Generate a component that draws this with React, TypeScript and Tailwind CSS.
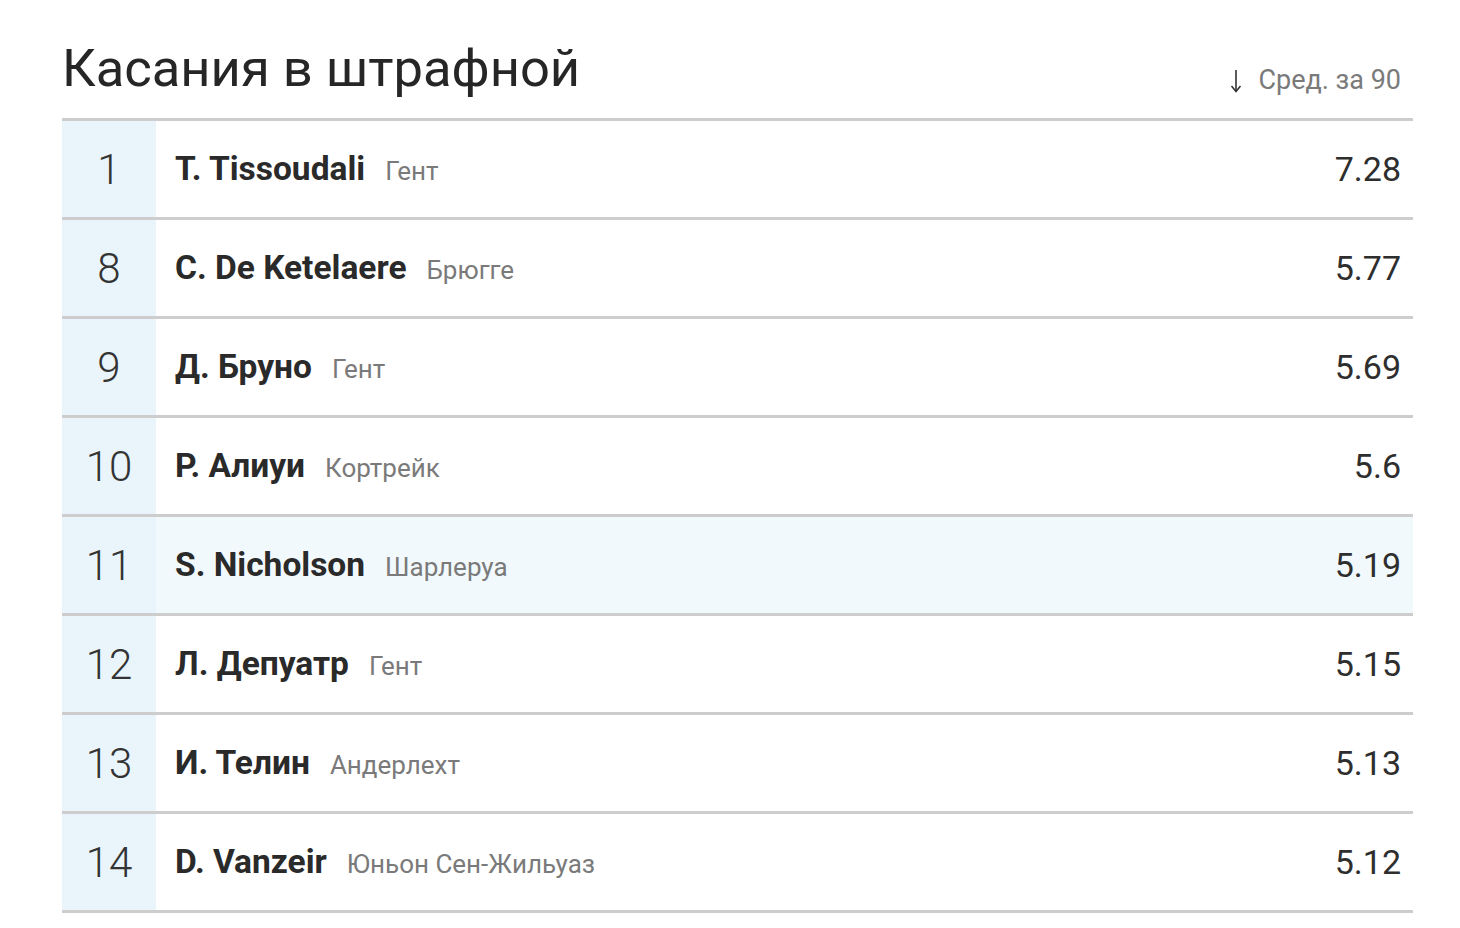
const rows = [
  { rank: 1, name: 'T. Tissoudali', team: 'Гент', value: '7.28' },
  { rank: 8, name: 'C. De Ketelaere', team: 'Брюгге', value: '5.77' },
  { rank: 9, name: 'Д. Бруно', team: 'Гент', value: '5.69' },
  { rank: 10, name: 'Р. Алиуи', team: 'Кортрейк', value: '5.6' },
  { rank: 11, name: 'S. Nicholson', team: 'Шарлеруа', value: '5.19', active: true },
  { rank: 12, name: 'Л. Депуатр', team: 'Гент', value: '5.15' },
  { rank: 13, name: 'И. Телин', team: 'Андерлехт', value: '5.13' },
  { rank: 14, name: 'D. Vanzeir', team: 'Юньон Сен-Жильуаз', value: '5.12' },
];

export default function App() {
  return (
    <div className="min-h-[928px] bg-white pl-[62px] pr-[47px] pt-[36px] font-['Roboto',sans-serif] text-[#262626]">
      <div className="flex items-end justify-between pr-[12px] pb-[18px]">
        <h1 className="text-[52.5px] leading-[64px] font-normal">Касания в штрафной</h1>
        <div className="flex items-center gap-[16px] pb-[4px] text-[27px] leading-[32px] text-[#7a7a7a]">
          {/* sort arrow */}
          <svg width="12" height="24" viewBox="0 0 12 24" className="mt-[2px]">
            <path d="M6 1 V22" stroke="#333" strokeWidth="1.6" fill="none" />
            <path d="M1.5 17 L6 22.5 L10.5 17" stroke="#333" strokeWidth="1.6" fill="none" />
          </svg>
          <span>Сред. за 90</span>
        </div>
      </div>
      <div className="border-t-[3px] border-[#cdcdcd]">
        {rows.map((r) => (
          <div
            key={r.rank}
            className={`flex h-[99px] border-b-[3px] border-[#cdcdcd] ${r.active ? 'bg-[#f2f9fc]' : 'bg-white'}`}
          >
            <div className="flex w-[94px] items-center justify-center bg-[#eaf5fb] text-[42px] font-light text-[#333]">
              {r.rank}
            </div>
            <div className="flex flex-1 items-center pl-[19px] pr-[12px]">
              <span className="text-[33.5px] font-bold text-[#2a2a2a]">{r.name}</span>
              <span className="ml-[20px] mt-[4px] text-[26px] text-[#7a7a7a]">{r.team}</span>
              <span className="ml-auto text-[34px] text-[#2e2e2e]">{r.value}</span>
            </div>
          </div>
        ))}
      </div>
    </div>
  );
}
